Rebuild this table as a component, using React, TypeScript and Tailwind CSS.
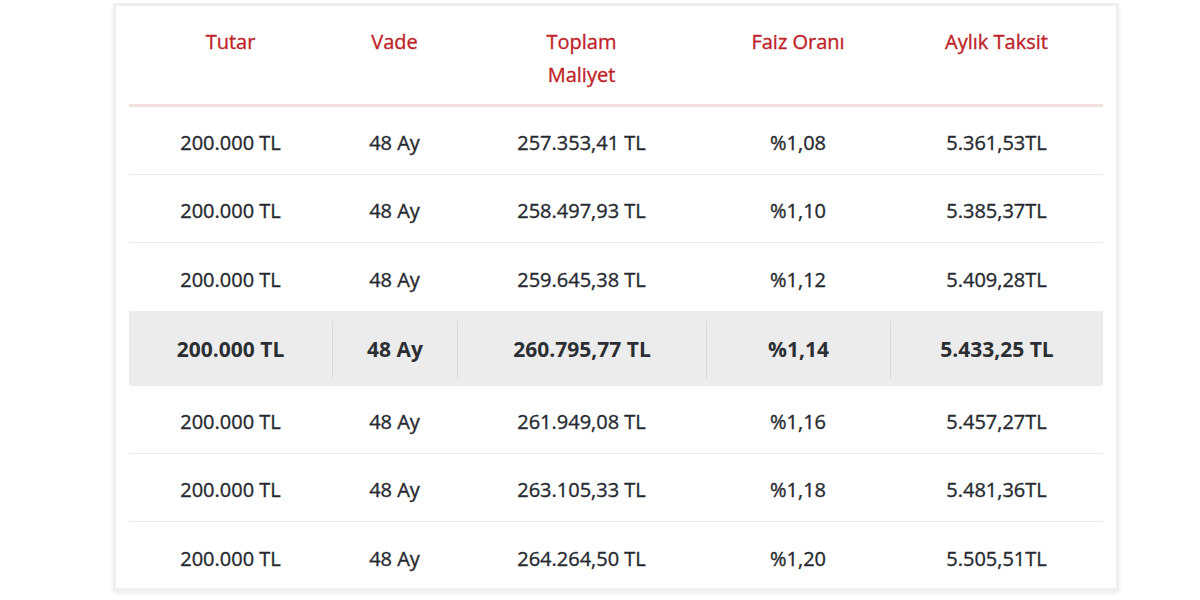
const rows = [
  ["200.000 TL", "48 Ay", "257.353,41 TL", "%1,08", "5.361,53TL"],
  ["200.000 TL", "48 Ay", "258.497,93 TL", "%1,10", "5.385,37TL"],
  ["200.000 TL", "48 Ay", "259.645,38 TL", "%1,12", "5.409,28TL"],
  ["200.000 TL", "48 Ay", "260.795,77 TL", "%1,14", "5.433,25 TL"],
  ["200.000 TL", "48 Ay", "261.949,08 TL", "%1,16", "5.457,27TL"],
  ["200.000 TL", "48 Ay", "263.105,33 TL", "%1,18", "5.481,36TL"],
  ["200.000 TL", "48 Ay", "264.264,50 TL", "%1,20", "5.505,51TL"],
];

const widths = ["w-[203px]", "w-[125px]", "w-[249px]", "w-[184px]", "w-[213px]"];

export default function App() {
  return (
    <div className="w-[1200px] h-[600px] bg-white pt-[3px] pl-[113px] font-['Open_Sans',sans-serif]">
      <div className="w-[1006px] h-[588px] border-[3px] border-[#efefef] bg-white px-[13px] shadow-[0_3px_4px_rgba(0,0,0,0.06)]">
        <div className="flex h-[101px] border-b-[3px] border-[#f1dede] text-[20px] leading-[33px] text-[#be2329] pt-[19px] [-webkit-text-stroke:0.35px_#be2329]">
          <div className={`${widths[0]} text-center`}>Tutar</div>
          <div className={`${widths[1]} text-center`}>Vade</div>
          <div className={`${widths[2]} text-center`}>
            Toplam
            <br />
            Maliyet
          </div>
          <div className={`${widths[3]} text-center`}>Faiz Oranı</div>
          <div className={`${widths[4]} text-center`}>Aylık Taksit</div>
        </div>
        {rows.map((r, i) => {
          const hl = i === 3;
          return (
            <div
              key={i}
              className={
                hl
                  ? "flex h-[75px] items-center bg-[#ececec] text-[21px] font-bold text-[#2b2e33] pt-[2px]"
                  : "flex h-[68px] items-center pt-[5px] text-[20px] text-[#262a30] [-webkit-text-stroke:0.35px_#262a30] " +
                    (i === 2 || i === 6 ? "" : "border-b border-[#ececec]")
              }
            >
              {r.map((c, j) => (
                <div
                  key={j}
                  className={`${widths[j]} text-center ${
                    hl && j > 0 ? "border-l border-[#d9d9d9] h-[57px] flex items-center justify-center" : ""
                  }`}
                >
                  {c}
                </div>
              ))}
            </div>
          );
        })}
      </div>
    </div>
  );
}
